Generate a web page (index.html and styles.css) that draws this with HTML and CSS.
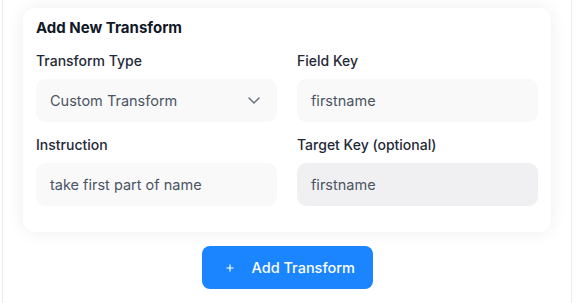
FILE: index.html
```html
<!DOCTYPE html>
<html>
<head>
<meta charset="utf-8">
<link rel="stylesheet" href="styles.css">
</head>
<body>
<div class="panel">
  <div class="card">
    <h2 class="card-title">Add New Transform</h2>
    <div class="grid">
      <div class="field">
        <label class="label">Transform Type</label>
        <div class="control select">
          <span>Custom Transform</span>
          <svg class="chev" width="12" height="7" viewBox="0 0 12 7"><path d="M1 1l5 5 5-5" fill="none" stroke="#6b7280" stroke-width="1.5" stroke-linecap="round" stroke-linejoin="round"/></svg>
        </div>
      </div>
      <div class="field">
        <label class="label">Field Key</label>
        <div class="control">firstname</div>
      </div>
      <div class="field">
        <label class="label">Instruction</label>
        <div class="control">take first part of name</div>
      </div>
      <div class="field">
        <label class="label">Target Key (optional)</label>
        <div class="control disabled">firstname</div>
      </div>
    </div>
  </div>
  <div class="actions">
    <button class="btn">
      <svg class="plus" width="8" height="8" viewBox="0 0 8 8"><path d="M4 0.5v7M0.5 4h7" stroke="#fff" stroke-width="1.2"/></svg>
      <span>Add Transform</span>
    </button>
  </div>
</div>
</body>
</html>
```

FILE: styles.css
```css
* { box-sizing: border-box; }
html, body { margin: 0; padding: 0; background: #fff; }
body { font-family: Inter, "Noto Sans", sans-serif; }

.panel {
  margin-left: 2px;
  width: 570px;
  height: 303px;
  border-left: 1px solid #ececec;
  border-right: 1px solid #ececec;
  padding: 8px 20px 0 20px;
  background: #fff;
}

.card {
  background: #fff;
  border-radius: 12px;
  box-shadow: 0 0 18px rgba(0, 0, 0, 0.07);
  padding: 10px 13px 26px 13px;
}

.card-title {
  margin: 0 0 13px 0;
  font-size: 15px;
  line-height: 20px;
  font-weight: 700;
  color: #111827;
}

.grid {
  display: grid;
  grid-template-columns: 1fr 1fr;
  column-gap: 20px;
  row-gap: 13px;
}

.field { display: flex; flex-direction: column; gap: 8px; }

.label {
  font-size: 14px;
  line-height: 20px;
  font-weight: 500;
  color: #1f2937;
}

.control {
  height: 43px;
  border-radius: 9px;
  background: #f9f9fa;
  padding: 0 14px;
  display: flex;
  align-items: center;
  font-size: 14.5px;
  font-weight: 400;
  color: #4b5563;
}

.select { justify-content: space-between; padding-right: 17px; }
.chev { display: block; }

.disabled { background: #f0f0f2; }

.actions {
  display: flex;
  justify-content: center;
  padding-top: 14px;
}

.btn {
  height: 43px;
  width: 171px;
  border: none;
  border-radius: 8px;
  background: #1a85ff;
  color: #fff;
  font-family: Inter, "Noto Sans", sans-serif;
  font-size: 14.5px;
  font-weight: 500;
  display: flex;
  align-items: center;
  padding: 0 0 0 24px;
  gap: 18px;
}
.plus { display: block; }
```
